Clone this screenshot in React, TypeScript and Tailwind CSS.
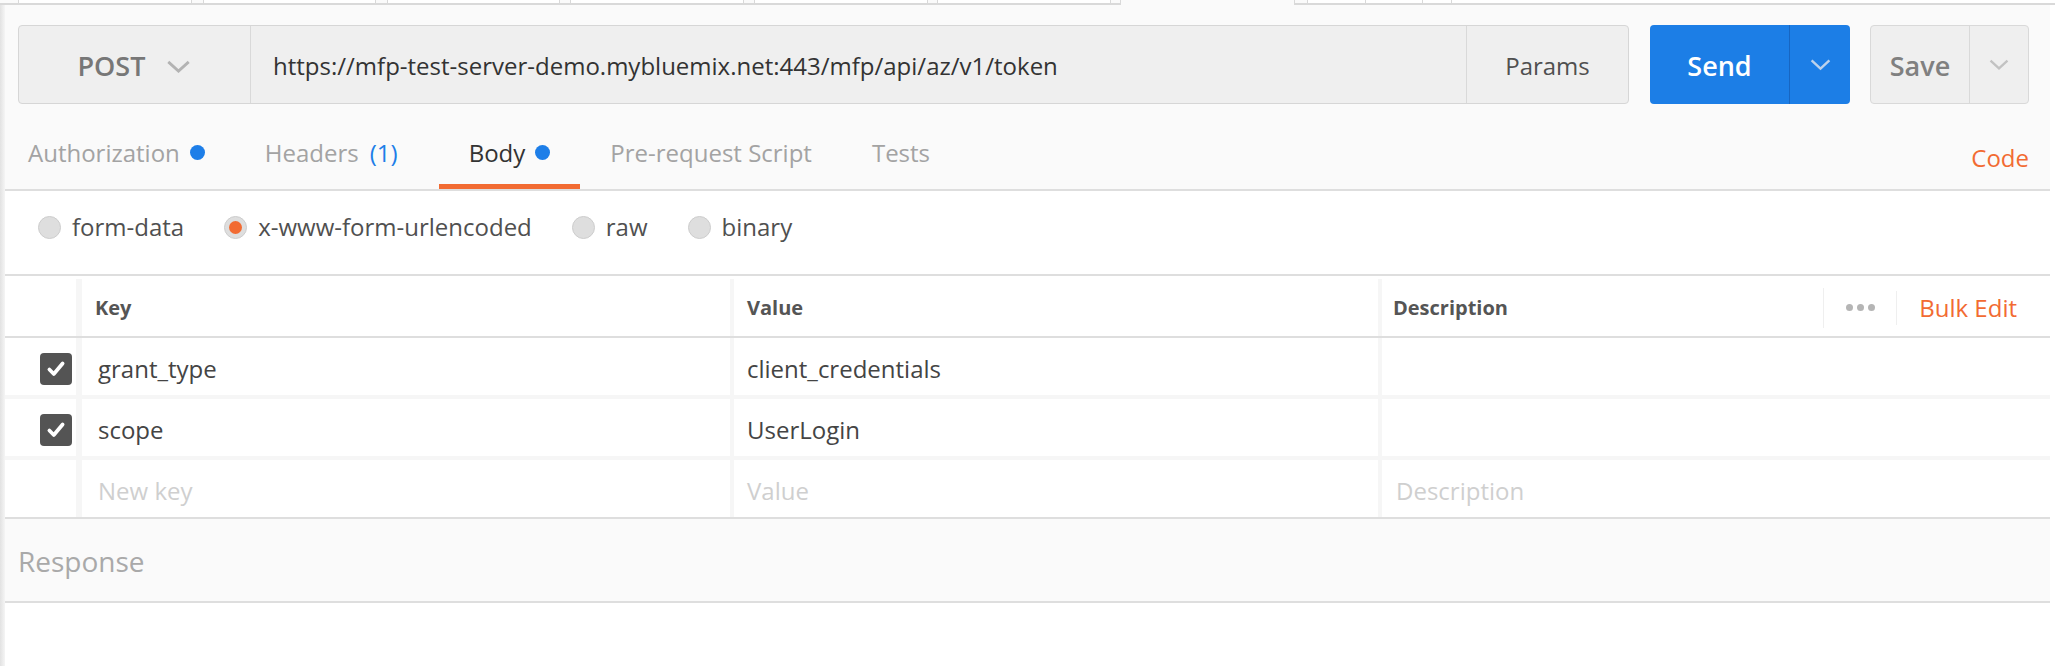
import React from "react";

const stripParts = [
  "w-[18px] border-b-2",
  "w-[174px] border-x border-b-2 bg-white",
  "w-[11px] border-b-2",
  "w-[173px] border-x border-b-2 bg-white",
  "w-[11px] border-b-2",
  "w-[173px] border-x border-b-2 bg-white",
  "w-[10px] border-b-2",
  "w-[174px] border-x border-b-2 bg-white",
  "w-[10px] border-b-2",
  "w-[174px] border-x border-b-2 bg-white",
  "w-[9px] border-b-2",
  "w-[174px] border-x border-b-2 bg-white",
  "w-[9px] border-b-2",
  "w-[175px] border-x",
  "w-[12px] border-b-2",
  "w-[59px] border-x border-b-2 bg-white",
  "w-[57px] border-r border-b-2 bg-white",
  "w-[29px] border-r border-b-2 bg-white",
  "flex-1 border-b-2 bg-white",
];

function Chevron({ className }: { className: string }) {
  return (
    <svg viewBox="0 0 26 14" className={className} fill="none" stroke="currentColor" strokeWidth={3}>
      <polyline points="2,2 13,12 24,2" />
    </svg>
  );
}

function Dot() {
  return <span className="ml-[10px] inline-block h-[15px] w-[15px] rounded-full bg-[#1d7ee8]" />;
}

function Tab({
  label,
  dot,
  active,
  extra,
  className = "px-[30px]",
}: {
  label: string;
  dot?: boolean;
  active?: boolean;
  extra?: React.ReactNode;
  className?: string;
}) {
  return (
    <div
      className={`flex items-center border-b-[5px] pt-[17px] text-[24px] ${className} ${
        active ? "border-[#f26b32] text-[#333]" : "border-transparent text-[#a3a3a3]"
      }`}
    >
      <span>{label}</span>
      {extra}
      {dot && <Dot />}
    </div>
  );
}

function Radio({ label, checked }: { label: string; checked?: boolean }) {
  return (
    <div className="flex items-center">
      <span className="flex h-[23px] w-[23px] items-center justify-center rounded-full border border-[#cdcdcd] bg-[#dedede]">
        {checked && <span className="h-[13px] w-[13px] rounded-full bg-[#f26b32]" />}
      </span>
      <span className="ml-[11px] text-[24px] text-[#505050]">{label}</span>
    </div>
  );
}

function Checkbox() {
  return (
    <span className="mt-[4px] flex h-[32px] w-[32px] items-center justify-center rounded-[4px] bg-[#545454]">
      <svg viewBox="0 0 20 20" className="h-[22px] w-[22px]" fill="none" stroke="white" strokeWidth={3.4} strokeLinecap="round" strokeLinejoin="round">
        <polyline points="4,10.5 8,14.5 16,5" />
      </svg>
    </span>
  );
}

function Row({
  keyText,
  value,
  desc,
  placeholder,
}: {
  keyText: string;
  value: string;
  desc: string;
  placeholder?: boolean;
}) {
  const tone = placeholder ? "text-[#cfcfcf]" : "text-[#444]";
  return (
    <div className="flex h-[57px] text-[24px]">
      <div className="flex w-[71px] items-center justify-end pr-[4px]">{!placeholder && <Checkbox />}</div>
      <div className="w-[6px] bg-[#f6f6f6]" />
      <div className={`flex w-[648px] items-center pl-[16px] pt-[4px] ${tone}`}>{keyText}</div>
      <div className="w-[4px] bg-[#f6f6f6]" />
      <div className={`flex w-[644px] items-center pl-[13px] pt-[4px] ${tone}`}>{value}</div>
      <div className="w-[4px] bg-[#f6f6f6]" />
      <div className={`flex flex-1 items-center pl-[14px] pt-[4px] ${tone}`}>{desc}</div>
    </div>
  );
}

export default function App() {
  return (
    <div className="flex h-[666px] w-[2055px] flex-col overflow-hidden bg-white font-['Open_Sans',sans-serif]">
      {/* open tab strip, only its bottom edge shows */}
      <div className="flex h-[5px] w-full bg-[#fafafa]">
        {stripParts.map((c, i) => (
          <div key={i} className={`h-full border-[#d9d9d9] ${c}`} />
        ))}
      </div>

      <div className="flex flex-1">
        <div className="w-[5px] bg-gradient-to-r from-[#e2e2e2] to-[#f5f5f5]" />

        <main className="flex w-[2045px] flex-col">
          <section className="bg-[#fafafa] pt-[20px]">
            {/* request bar */}
            <div className="flex h-[79px] pl-[13px] pr-[21px]">
              <div className="flex w-[1611px] rounded-[4px] border border-[#d6d6d6] bg-[#efefef]">
                <div className="flex w-[232px] items-center justify-center gap-[21px] border-r border-[#d9d9d9] pt-[3px]">
                  <span className="text-[27px] font-semibold text-[#777]">POST</span>
                  <Chevron className="h-[13px] w-[25px] text-[#b3b3b3]" />
                </div>
                <div className="flex flex-1 items-center pl-[22px] pt-[3px] text-[24px] text-[#333]">
                  https://mfp-test-server-demo.mybluemix.net:443/mfp/api/az/v1/token
                </div>
                <div className="flex w-[162px] items-center justify-center border-l border-[#d9d9d9] pt-[3px] text-[24px] text-[#505050]">
                  Params
                </div>
              </div>

              <div className="ml-[21px] flex w-[200px] rounded-[4px] bg-[#1c7ee6]">
                <div className="flex w-[139px] items-center justify-center pt-[3px] text-[27px] font-semibold text-white">Send</div>
                <div className="w-px bg-[#1766c2]" />
                <div className="flex flex-1 items-center justify-center">
                  <Chevron className="h-[13px] w-[21px] text-[#bcd2ec]" />
                </div>
              </div>

              <div className="ml-[20px] flex w-[159px] rounded-[4px] border border-[#d9d9d9] bg-[#efefef]">
                <div className="flex w-[98px] items-center justify-center pt-[3px] text-[27px] font-semibold text-[#808080]">Save</div>
                <div className="w-px bg-[#d9d9d9]" />
                <div className="flex flex-1 items-center justify-center">
                  <Chevron className="h-[13px] w-[20px] text-[#c2c2c2]" />
                </div>
              </div>
            </div>

            {/* tabs */}
            <div className="flex h-[87px] border-b-2 border-[#dedede] pr-[21px]">
              <div className="ml-[-7px] flex">
                <Tab label="Authorization" dot />
                <Tab
                  label="Headers"
                  className="pl-[30px] pr-[41px]"
                  extra={<span className="ml-[11px] text-[#1d7ee8]">(1)</span>}
                />
                <Tab label="Body" dot active />
                <Tab label="Pre-request Script" />
                <Tab label="Tests" />
              </div>
              <div className="ml-auto flex items-center pt-[22px] text-[24px] text-[#f26b32]">Code</div>
            </div>
          </section>

          {/* body type */}
          <div className="flex h-[83px] items-center gap-[40px] pb-[11px] pl-[33px]">
            <Radio label="form-data" />
            <Radio label="x-www-form-urlencoded" checked />
            <Radio label="raw" />
            <Radio label="binary" />
          </div>

          {/* key / value table */}
          <div className="border-y-2 border-[#dedede]">
            <div className="flex h-[62px] border-b-2 border-[#dedede] pt-[3px] text-[20px] font-bold text-[#555]">
              <div className="w-[71px]" />
              <div className="w-[6px] bg-[#f6f6f6]" />
              <div className="flex w-[648px] items-center pl-[13px]">Key</div>
              <div className="w-[4px] bg-[#f6f6f6]" />
              <div className="flex w-[644px] items-center pl-[13px]">Value</div>
              <div className="w-[4px] bg-[#f6f6f6]" />
              <div className="flex flex-1 items-center pl-[11px]">
                <span>Description</span>
                <div className="ml-auto h-[40px] w-px bg-[#efefef]" />
                <div className="flex w-[72px] items-center justify-center gap-[4px]">
                  <span className="h-[7px] w-[7px] rounded-full bg-[#b5b5b5]" />
                  <span className="h-[7px] w-[7px] rounded-full bg-[#b5b5b5]" />
                  <span className="h-[7px] w-[7px] rounded-full bg-[#b5b5b5]" />
                </div>
                <div className="h-[34px] w-px bg-[#efefef]" />
                <span className="pl-[22px] pr-[33px] text-[24px] font-normal text-[#f26b32]">Bulk Edit</span>
              </div>
            </div>
            <Row keyText="grant_type" value="client_credentials" desc="" />
            <div className="h-[4px] bg-[#f6f6f6]" />
            <Row keyText="scope" value="UserLogin" desc="" />
            <div className="h-[4px] bg-[#f6f6f6]" />
            <Row keyText="New key" value="Value" desc="Description" placeholder />
          </div>

          {/* response */}
          <div className="flex h-[84px] items-center border-b-2 border-[#dedede] bg-[#fafafa] pl-[13px] pt-[2px] text-[28px] text-[#a9a9a9]">
            Response
          </div>
        </main>

        <div className="flex-1 bg-white" />
      </div>
    </div>
  );
}
